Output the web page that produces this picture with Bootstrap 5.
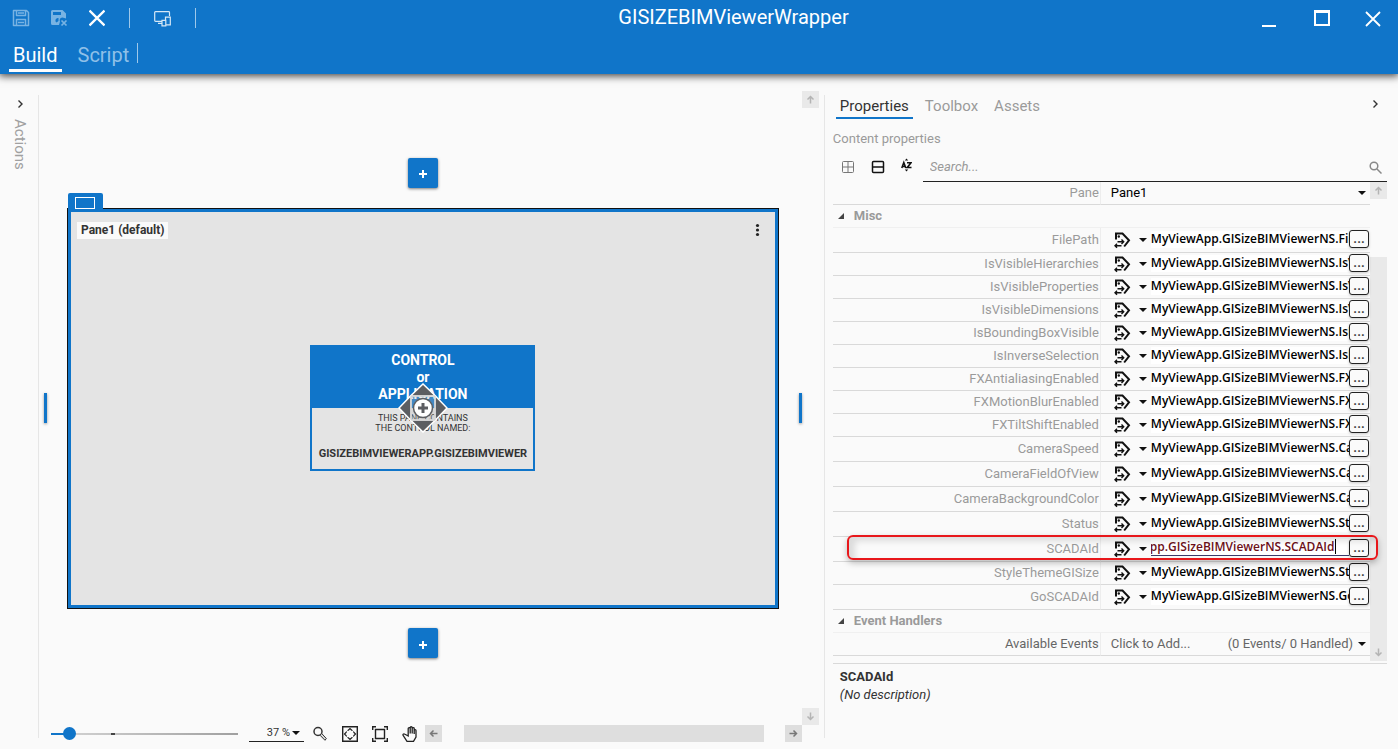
<!DOCTYPE html>
<html lang="en">
<head>
<meta charset="utf-8">
<meta name="viewport" content="width=device-width, initial-scale=1">
<title>GISIZEBIMViewerWrapper</title>
<link href="https://cdn.jsdelivr.net/npm/bootstrap@5.3.0/dist/css/bootstrap.min.css" rel="stylesheet">
<style>
  :root { --brand: #1075c9; --page: #fafafa; }
  body { font: 13px/16px Roboto, "Liberation Sans", sans-serif; background: var(--page); color: #333; fill: none; stroke: currentColor; }
  button, input, select { font: inherit; color: inherit; }
  svg { display: block; }
  .bare { border: 0; background: none; padding: 0; }

  .app-bar { background: var(--brand); color: #fff; height: 74px; box-shadow: 0 1px 8px 1px rgba(0,0,0,.75); z-index: 2; }
  .app-title { font-size: 20px; line-height: 24px; font-weight: 400; padding: 5px 0 0 69px; }
  .tool-row { height: 36px; padding-left: 12px; }
  .tool-row .faded { color: #78b3e3; }
  .bar-sep { width: 1px; height: 20px; background: #9ec8ea; }
  .mode-nav { padding: 7px 0 0 9px; }
  .mode-tab { font-size: 20px; line-height: 24px; color: #8fc0e8; text-decoration: none; padding: 0 4px 2px; border-bottom: 3px solid transparent; }
  .mode-tab.active { color: #fff; border-color: #fff; }

  .work { padding: 17px 0 7px; }
  .rail { width: 39px; border-right: 1px solid #e6e6e6; margin: 4px 0; padding: 4px 0 0 1px; }
  .rail-label { writing-mode: vertical-rl; font-size: 15px; line-height: 18px; color: #a0a0a0; margin-top: 10px; }
  .stage { padding: 0 5px; }
  .scroll-btn { width: 17px; height: 17px; background: #e9e9e9; color: #b4b4b4; }
  .scroll-btn.on { background: #dedede; color: #777; }
  .add-btn { width: 30px; height: 30px; background: var(--brand); color: #fff; border-radius: 2px; box-shadow: 0 1px 3px rgba(0,0,0,.5); }
  .frame-row { margin: 20px 0 19px; }
  .edge { width: 3px; height: 30px; background: var(--brand); box-shadow: 0 1px 3px rgba(0,0,0,.4); }
  .frame { margin: 0 20px; border: 1px solid #111; aspect-ratio: 712 / 402; }
  .frame-in { border: 3px solid var(--brand); background: #e4e4e4; }
  .frame-tab { left: 0; top: -16px; width: 35px; height: 16px; background: var(--brand); border-radius: 2px 2px 0 0; color: #fff; }
  .frame-name { font-size: 12px; font-weight: 700; line-height: 17px; background: var(--page); padding: 0 4px; margin: 10px 6px; }
  .frame-menu { margin: 11px 15px; }
  .ctl { width: 225px; border: 2px solid var(--brand); }
  .ctl-head { background: var(--brand); color: #fff; font-size: 14px; font-weight: 700; line-height: 17px; padding: 5px 0 5px; }
  .ctl-body { font-size: 9px; line-height: 10px; height: 61px; padding-top: 5px; }
  .ctl-id { font-size: 11px; font-weight: 700; line-height: 12px; margin-top: 15px; }
  .move { left: 50%; top: 50%; transform: translate(-50%, -50%); }

  .zoom-bar { height: 17px; padding-right: 17px; }
  .zoom-range { -webkit-appearance: none; appearance: none; width: 187px; height: 14px; margin: 0 11px 0 7px; background: linear-gradient(#444,#444) 60px 6px / 4px 2px no-repeat, linear-gradient(var(--brand),var(--brand)) 0 6px / 18px 2px no-repeat, linear-gradient(90deg,#d6d6d6,#a0a0a0) 0 6px / 100% 2px no-repeat; }
  .zoom-range::-webkit-slider-thumb { -webkit-appearance: none; width: 13px; height: 13px; border-radius: 50%; background: var(--brand); }
  .pick { position: relative; }
  .pick select { appearance: none; width: 100%; outline: 0; }
  .pick::after { content: ""; position: absolute; right: 4px; top: 50%; margin-top: -2px; border: 4px solid transparent; border-top-color: #111; border-bottom: 0; pointer-events: none; }
  .zoom-pick { width: 55px; border-bottom: 1px solid #222; }
  .zoom-pick select { display: block; font-size: 11px; padding-right: 14px; text-align: right; text-align-last: right; }
  .zoom-tools { gap: 14px; margin-left: 8px; }
  .h-thumb { width: 300px; height: 17px; background: #dedede; margin-left: 22px; }

  .side { width: calc(41% + 1px); border-left: 1px solid #e6e6e6; margin: 4px 0; padding: 0 11px 0 8px; }
  .side-tab { font-size: 15px; line-height: 18px; color: #9a9a9a; text-decoration: none; padding: 2px 4px 2px; border-bottom: 2px solid transparent; }
  .side-tab.active { color: #333; border-color: var(--brand); }
  .hint { color: #9a9a9a; padding: 12px 0 4px; }
  .finder { height: 31px; }
  .search { border-bottom: 1px solid #222; margin-left: 11px; padding: 2px 5px 0 7px; color: #888; }
  .search input { outline: 0; font-style: italic; }
  .search input::placeholder { color: #999; opacity: 1; }

  .props { table-layout: fixed; width: 100%; border-collapse: separate; border-spacing: 0; }
  .name-col { width: 267px; }
  .props th, .props td { padding: 0; height: 23px; border-bottom: 1px solid #d9d9d9; font-weight: 400; }
  .props th { text-align: right; color: #9a9a9a; padding-right: 1px; }
  .props th label { display: block; }
  .props td { border-left: 1px solid #ededed; }
  .props .tall > * { height: 25px; }
  .props .group th { text-align: left; font-weight: 700; border-color: #f0f0f0; padding-left: 5px; }
  .props .dark th, .props .dark td { color: #666; }
  .props select, .add-event { padding-left: 10px; }
  .event-count { margin-right: 17px; }
  .tri { border: 3px solid #444; border-top-color: transparent; border-left-color: transparent; margin-right: 10px; }
  .bind { margin-left: 13px; color: #111; }
  .caret { border: 4px solid transparent; border-top-color: #111; border-bottom: 0; }
  .val { font: 600 12px/16px "Open Sans", "Noto Sans", sans-serif; color: #000; background: #fff; height: 17px; margin: 0 0 2px 4px; overflow: hidden; }
  .val input { width: 100%; padding: 0; outline: 0; background: none; }
  .val.edit { color: #6d0f18; border-bottom: 1px solid #3b3b6b; padding-right: 13px; margin-bottom: 4px; }
  .val.edit > div { border-right: 1px solid #000; height: 15px; overflow: hidden; }
  .dots { width: 20px; height: 18px; border: 1px solid #222; border-radius: 3px; background: #fafafa; margin: 0 1px 2px 0; line-height: 12px; font-weight: 700; color: #444; box-shadow: 0 1px 3px rgba(0,0,0,.2); }
  .callout { left: 14px; right: -8px; top: -2px; height: 25px; border: 2px solid #e8171b; border-radius: 6px; box-shadow: 0 3px 6px rgba(0,0,0,.25), inset 6px 4px 6px rgba(0,0,0,.12); pointer-events: none; z-index: 3; }
  .v-thumb { background: #e9e9e9; margin-top: 58px; }
  .props-wrap { padding-bottom: 5px; }
  .about { border-top: 1px solid #d9d9d9; margin-top: 2px; padding: 4px 7px; line-height: 18px; }
</style>
</head>
<body class="vh-100 d-flex flex-column overflow-hidden">
<svg width="0" height="0" class="position-absolute" aria-hidden="true">
  <symbol id="tag" viewBox="0 0 17 17"><path d="M2 7.500V1.500h6.500L15 8.300l-4.800 6.200" stroke-width="2"/><circle cx="4.800" cy="4.500" r="1.200" fill="currentColor" stroke="none"/><path d="M3.500 9.700h6M7.500 7.500l2.200 2.200-2.200 2.200M7.500 13.700H1M3 11.700l-2 2 2 2" stroke-width="1.400"/></symbol>
  <symbol id="up" viewBox="0 0 17 17"><path d="M8.500 12.500v-7M5.500 8.500l3-3 3 3" stroke-width="1.500"/></symbol>
  <symbol id="chev" viewBox="0 0 8 10"><path d="M2.500 1.500 6 5 2.500 8.500" stroke-width="1.400"/></symbol>
</svg>

<header class="app-bar position-relative flex-shrink-0">
  <div class="tool-row d-flex align-items-center">
    <button class="bare faded" aria-label="Save"><svg width="18" height="18" viewBox="0 0 18 18" stroke-width="1.500"><path d="M1.500 1.500h13l2 2v13h-15zM4.500 1.500v5h9v-5M6 4h6M4.500 16.500v-6h9v6M6 13.500h6" stroke-linejoin="round"/></svg></button>
    <button class="bare faded ms-3 ps-1" aria-label="Save and close"><svg width="19" height="18" viewBox="0 0 19 18"><path fill="currentColor" stroke="none" fill-rule="evenodd" d="M2.500 1h10l3.500 3.500v5l-3.500-1c-3 0-3 3-2.500 4l-1 3.500H2.500a1.500 1.500 0 0 1-1.500-1.500v-12A1.500 1.500 0 0 1 2.500 1zM3 3v3h8V3zM8.500 9a2.500 2.500 0 0 0-2 4.500l2-1.500z"/><path d="m11.500 11.500 5 5m0-5-5 5" stroke-width="1.700"/></svg></button>
    <button class="bare ms-3 ps-1" aria-label="Discard"><svg width="16" height="18" viewBox="0 0 16 18" stroke-width="2.400"><path d="m.5 1.500 15 15m0-15-15 15"/></svg></button>
    <span class="bar-sep ms-4 me-4"></span>
    <button class="bare" aria-label="Devices"><svg width="17" height="17" viewBox="0 0 17 17" stroke-width="1.200" stroke="#d6e8f6"><path d="M15.500 6V2.500q0-.8-.8-.8H1.500q-.8 0-.8.8v8q0 .8.800.8H8M4 13.300h3.500M11.500 11V7.200h4.800v7.600H12M8 10.300h3.800v5.500H8z"/></svg></button>
    <span class="bar-sep ms-4"></span>
    <div class="ms-auto d-flex align-items-center">
      <button class="bare me-4 pe-2 ms-1" aria-label="Minimize"><svg width="20" height="18" viewBox="0 0 20 18" stroke-width="2"><path d="M0 17h14"/></svg></button>
      <button class="bare me-4 pe-2" aria-label="Maximize"><svg width="18" height="18" viewBox="0 0 18 18"><path d="M1 3v13h14V3z" stroke-width="2"/><path d="M0 2.500h16" stroke-width="3"/></svg></button>
      <button class="bare me-3" aria-label="Close"><svg width="18" height="18" viewBox="0 0 18 18" stroke-width="1.800"><path d="m2 3 14 14M16 3 2 17"/></svg></button>
    </div>
  </div>
  <h1 class="app-title position-absolute top-0 start-50 translate-middle-x">GISIZEBIMViewerWrapper</h1>
  <nav class="mode-nav d-flex align-items-start">
    <a href="#build" class="mode-tab active">Build</a>
    <a href="#script" class="mode-tab ms-2 ps-2 me-1">Script</a>
    <span class="bar-sep"></span>
  </nav>
</header>

<main class="work d-flex flex-grow-1">
  <aside class="rail d-flex flex-column align-items-center flex-shrink-0">
    <button class="bare" aria-label="Expand actions"><svg width="8" height="10"><use href="#chev"/></svg></button>
    <span class="rail-label">Actions</span>
  </aside>

  <section class="stage flex-grow-1 d-flex flex-column">
    <div class="d-flex flex-grow-1">
      <div class="flex-grow-1 d-flex flex-column justify-content-center">
        <button class="bare add-btn mx-auto" aria-label="Add pane above"><svg width="30" height="30" viewBox="0 0 30 30" stroke-width="2"><path d="M11 16h8M15 12v8"/></svg></button>
        <div class="frame-row d-flex align-items-center">
          <span class="edge"></span>
          <div class="frame flex-grow-1 position-relative d-flex">
            <div class="frame-tab position-absolute"><svg width="35" height="16"><rect x="7.500" y="4.500" width="19" height="11"/></svg></div>
            <div class="frame-in flex-grow-1 position-relative d-flex justify-content-between align-items-start">
              <span class="frame-name">Pane1 (default)</span>
              <button class="bare frame-menu" aria-label="Pane menu"><svg width="5" height="14" fill="#222" stroke="none"><circle cx="2.500" cy="2.500" r="1.600"/><circle cx="2.500" cy="7" r="1.600"/><circle cx="2.500" cy="11.500" r="1.600"/></svg></button>
              <div class="position-absolute top-0 start-0 w-100 h-100 d-flex align-items-center justify-content-center pe-none">
                <div class="ctl text-center position-relative">
                  <div class="ctl-head">CONTROL<br>or<br>APPLICATION</div>
                  <div class="ctl-body">THIS PANE CONTAINS<br>THE CONTROL NAMED:<div class="ctl-id">GISIZEBIMVIEWERAPP.GISIZEBIMVIEWER</div></div>
                  <svg class="move position-absolute" width="50" height="50" viewBox="0 0 50 50"><g fill="#5c5e62" stroke="#fff" stroke-width="1.500"><path d="M12.500 13 25 1l12.500 12zM12.500 37 25 49l12.500-12zM13 12.500 1 25l12 12.500zM37 12.500 49 25 37 37.500z"/></g><path d="M13 13h24v24H13z" fill="#bbb" fill-opacity=".3" stroke="#ccc"/><circle cx="25" cy="25" r="9.500" fill="#fff" stroke="#5c5e62" stroke-width="1.500"/><path d="M20 25h10M25 20v10" stroke="#5c5e62" stroke-width="3"/></svg>
                </div>
              </div>
            </div>
          </div>
          <span class="edge"></span>
        </div>
        <button class="bare add-btn mx-auto" aria-label="Add pane below"><svg width="30" height="30" viewBox="0 0 30 30" stroke-width="2"><path d="M11 17h8M15 13v8"/></svg></button>
      </div>
      <div class="d-flex flex-column justify-content-between">
        <button class="bare scroll-btn" aria-label="Scroll up"><svg width="17" height="17"><use href="#up"/></svg></button>
        <button class="bare scroll-btn" aria-label="Scroll down"><svg width="17" height="17" style="transform:rotate(180deg)"><use href="#up"/></svg></button>
      </div>
    </div>
    <div class="zoom-bar d-flex align-items-center">
      <input type="range" class="zoom-range" aria-label="Zoom" min="0" max="100" value="7">
      <div class="pick zoom-pick"><select class="bare" aria-label="Zoom level"><option>37 %</option></select></div>
      <div class="zoom-tools d-flex align-items-center">
        <button class="bare" aria-label="Zoom tool"><svg width="16" height="16" viewBox="0 0 16 16" stroke="#333"><circle cx="6" cy="5.500" r="4" stroke-width="1.500"/><path d="M8 9.200 9.700 7.500l4.600 5-1.300 1.800z" fill="#ddd"/></svg></button>
        <button class="bare" aria-label="Fit content"><svg width="16" height="16" viewBox="0 0 16 16" stroke="#222"><path d="M.7.7h14.600v14.600H.7z" stroke-width="1.400"/><path d="m6 4.500 2-2 2 2M6 11.500l2 2 2-2M4.500 6l-2 2 2 2M11.500 6l2 2-2 2" stroke-width="1.200"/><path d="m4.500 5.500 1-1M10.500 4.500l1 1M4.500 10.500l1 1M11.500 10.500l-1 1"/></svg></button>
        <button class="bare" aria-label="Fit screen"><svg width="16" height="16" viewBox="0 0 16 16" stroke="#222" stroke-width="1.400"><path d="M3.500 3.500h9v9h-9z"/><path d="M.7 4V.7H4M12 .7h3.300V4M15.300 12v3.300H12M4 15.300H.7V12"/></svg></button>
        <button class="bare" aria-label="Pan"><svg width="15" height="16" viewBox="0 0 15 16" stroke="#222" stroke-width="1.300"><path d="M5 15.300h6.500L14 11V4.500c0-1.200-1.800-1.200-1.800 0V8 2.500c0-1.300-2-1.300-2 0V7.500 1.700c0-1.300-2-1.300-2 0V7.500 2.500c0-1.300-2-1.300-2 0V10L3 8.300C1.500 7.300.3 8.500 1.300 9.600z"/></svg></button>
      </div>
      <button class="bare scroll-btn on ms-2" aria-label="Scroll left"><svg width="17" height="17" style="transform:rotate(-90deg)"><use href="#up"/></svg></button>
      <div class="flex-grow-1 d-flex"><div class="h-thumb"></div></div>
      <button class="bare scroll-btn on" aria-label="Scroll right"><svg width="17" height="17" style="transform:rotate(90deg)"><use href="#up"/></svg></button>
    </div>
  </section>

  <aside class="side flex-shrink-0 d-flex flex-column">
    <div class="d-flex align-items-start">
      <nav class="d-flex gap-2" style="margin-left:3px">
        <a href="#properties" class="side-tab active">Properties</a>
        <a href="#toolbox" class="side-tab">Toolbox</a>
        <a href="#assets" class="side-tab">Assets</a>
      </nav>
      <button class="bare ms-auto mt-1 me-1 pe-1" aria-label="Collapse panel"><svg width="8" height="10"><use href="#chev"/></svg></button>
    </div>
    <div class="hint">Content properties</div>
    <div class="finder d-flex">
      <div class="d-flex align-items-center ps-2">
        <button class="bare me-3" aria-label="Expand all"><svg width="14" height="14" stroke="#777"><rect x="1.500" y="1.500" width="11" height="11" rx="1"/><path d="M7 2v10M2 7h10"/></svg></button>
        <button class="bare me-3" aria-label="Collapse all"><svg width="14" height="14" stroke="#111"><rect x="1.500" y="1.500" width="11" height="11" rx="1" stroke-width="1.500"/><path d="M2 7h10" stroke-width="1.500"/></svg></button>
        <button class="bare pb-1" aria-label="Sort alphabetically"><svg width="11" height="14" viewBox="0 0 11 14" stroke="#111" stroke-width="1.600"><path d="M.8 10 2.800 4.500 4.800 10M1.500 8.500h2.800M6 4.800h4L6.300 9.500h4.200"/><path d="M3.800 2.500 5.500.5l1.700 2zM3.800 11.500l1.700 2 1.700-2z" fill="#111" stroke="none"/></svg></button>
      </div>
      <label class="search flex-grow-1 d-flex align-items-center">
        <input type="search" class="bare flex-grow-1" placeholder="Search..." aria-label="Search properties">
        <svg width="13" height="13" stroke-width="1.500"><circle cx="5" cy="5" r="3.800"/><path d="m8 8 4.500 4.500"/></svg>
      </label>
    </div>
    <div class="props-wrap d-flex">
      <div class="flex-grow-1">
        <table class="props">
          <colgroup><col class="name-col"><col></colgroup>
          <tbody id="rows">
            <tr><th scope="row"><label for="pane">Pane</label></th><td><div class="pick text-black"><select id="pane" class="bare"><option>Pane1</option></select></div></td></tr>
            <tr class="group"><th colspan="2"><span class="d-flex align-items-center"><i class="tri"></i>Misc</span></th></tr>
          </tbody>
          <tbody>
            <tr class="group"><th colspan="2"><span class="d-flex align-items-center"><i class="tri"></i>Event Handlers</span></th></tr>
            <tr class="dark"><th scope="row">Available Events</th><td><div class="pick d-flex justify-content-between"><button class="bare add-event">Click to Add...</button><span class="event-count">(0 Events/ 0 Handled)</span></div></td></tr>
          </tbody>
        </table>
      </div>
      <div class="d-flex flex-column" style="margin-bottom:-5px">
        <button class="bare scroll-btn" aria-label="Scroll up"><svg width="17" height="17"><use href="#up"/></svg></button>
        <div class="v-thumb flex-grow-1"></div>
        <button class="bare scroll-btn" aria-label="Scroll down"><svg width="17" height="17" style="transform:rotate(180deg)"><use href="#up"/></svg></button>
      </div>
    </div>
    <div class="about"><strong class="d-block">SCADAId</strong><em>(No description)</em></div>
  </aside>
</main>

<script src="https://cdn.jsdelivr.net/npm/bootstrap@5.3.0/dist/js/bootstrap.bundle.min.js"></script>
<script>
  const tall = ['FilePath', 'CameraSpeed', 'CameraFieldOfView', 'CameraBackgroundColor', 'Status', 'SCADAId', 'GoSCADAId'];
  const names = ['FilePath', 'IsVisibleHierarchies', 'IsVisibleProperties', 'IsVisibleDimensions', 'IsBoundingBoxVisible',
    'IsInverseSelection', 'FXAntialiasingEnabled', 'FXMotionBlurEnabled', 'FXTiltShiftEnabled', 'CameraSpeed',
    'CameraFieldOfView', 'CameraBackgroundColor', 'Status', 'SCADAId', 'StyleThemeGISize', 'GoSCADAId'];
  document.getElementById('rows').insertAdjacentHTML('beforeend', names.map(n => {
    const edit = n === 'SCADAId';
    return `<tr class="position-relative ${tall.includes(n) ? 'tall' : ''}">
      <th scope="row"><label for="p-${n}">${n}</label></th>
      <td><div class="d-flex align-items-center">
        <button class="bare bind d-flex align-items-center" aria-label="Binding of ${n}"><svg width="17" height="17"><use href="#tag"/></svg><i class="caret ms-2"></i></button>
        <div class="val flex-grow-1 ${edit ? 'edit' : ''}"><div><input id="p-${n}" class="bare d-block" value="MyViewApp.GISizeBIMViewerNS.${n}"></div></div>
        <button class="bare dots" aria-label="Browse ${n}">...</button>
      </div>${edit ? '<div class="callout position-absolute"></div>' : ''}</td></tr>`;
  }).join(''));
  const field = document.getElementById('p-SCADAId');
  field.scrollLeft = field.scrollWidth;
</script>
</body>
</html>
